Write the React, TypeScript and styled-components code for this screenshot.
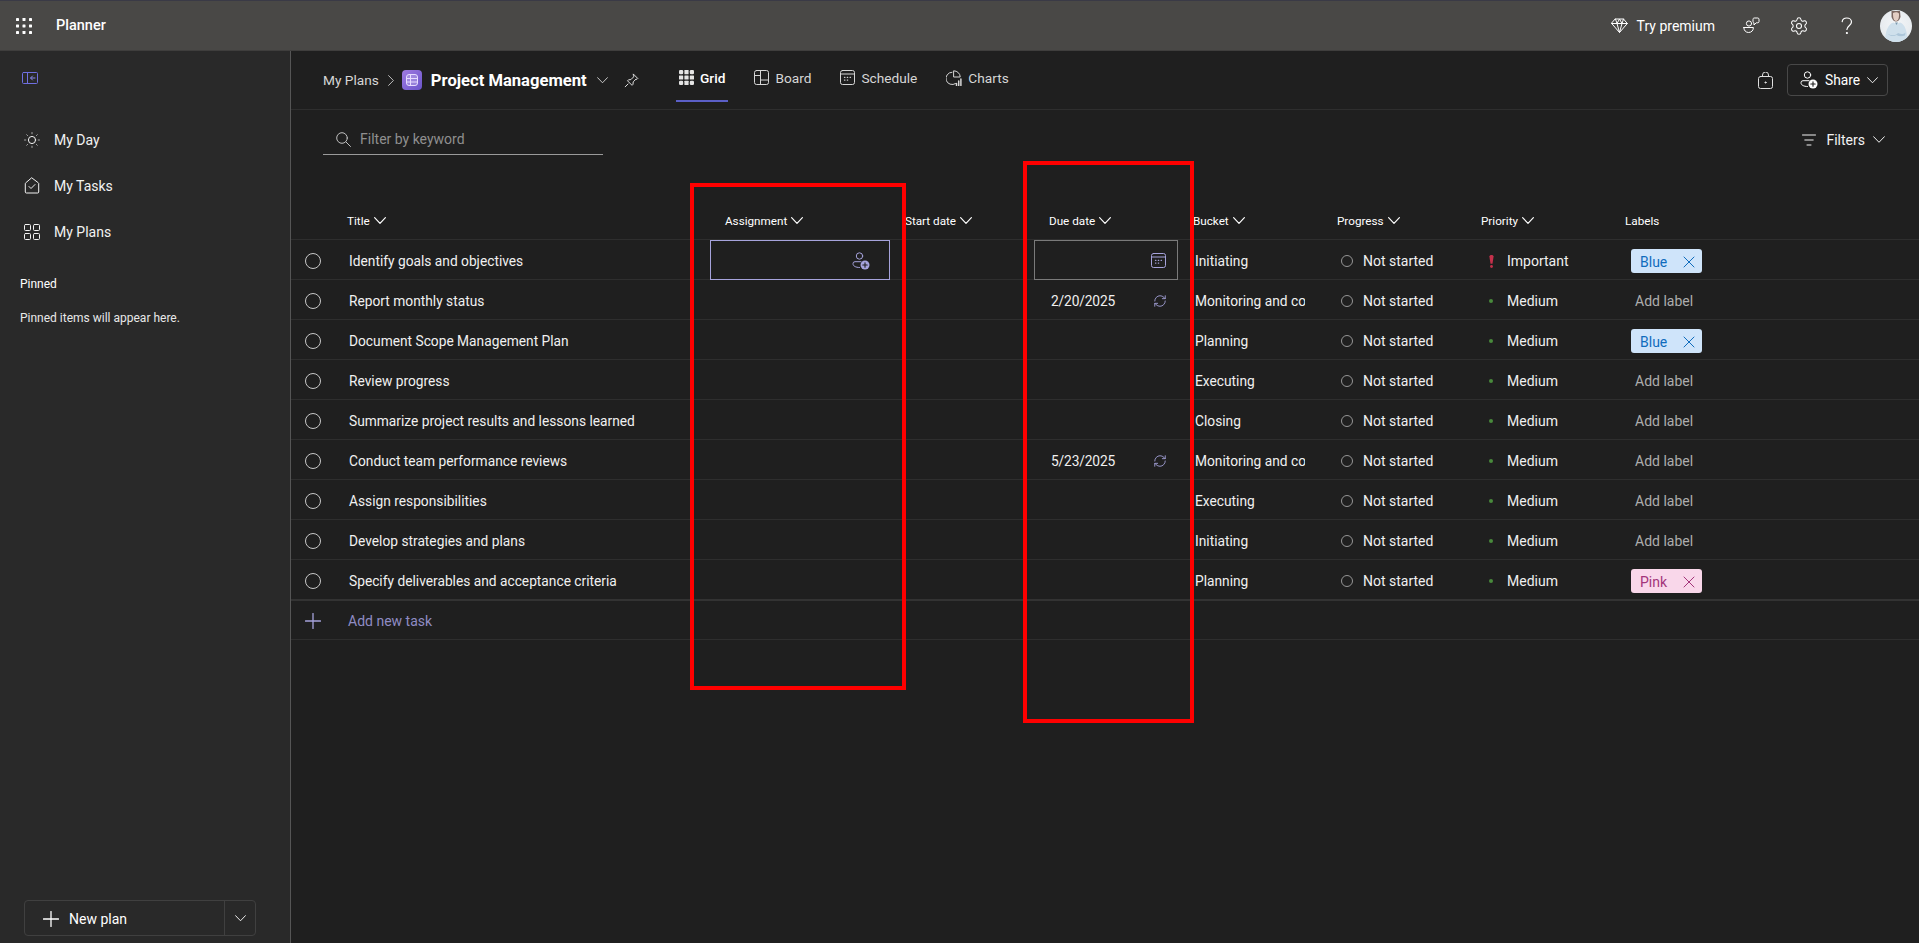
import React from 'react';
import styled, { createGlobalStyle } from 'styled-components';
import { RefreshCw, Settings } from 'lucide-react';

const GlobalStyle = createGlobalStyle`
  html, body {
    margin: 0;
    height: 100%;
    background: #1f1f1f;
  }
  body {
    font-family: Roboto, "Liberation Sans", sans-serif;
    font-size: 14px;
    color: #f5f5f5;
    overflow: hidden;
  }
  * {
    box-sizing: border-box;
  }
`;

const Page = styled.div`
  position: relative;
  display: flex;
  flex-direction: column;
  height: 943px;
  overflow: hidden;
`;

const TopBar = styled.header`
  display: flex;
  align-items: center;
  flex: 0 0 51px;
  padding: 0 7px 0 16px;
  background: #494846;
  border-top: 1px solid #3a3a46;
  border-bottom: 1px solid #3f3e3d;
`;

const AppName = styled.span`
  margin-left: 24px;
  font-size: 14.5px;
  font-weight: 500;
  color: #fff;
`;

const TopActions = styled.div`
  display: flex;
  align-items: center;
  margin-left: auto;
`;

const Premium = styled.div`
  display: flex;
  align-items: center;
  gap: 9px;
  padding-right: 12px;
  color: #fff;
`;

const TopIcon = styled.div`
  display: flex;
  align-items: center;
  justify-content: center;
  width: 48px;
  color: #fff;
`;

const AvatarWrap = styled.div`
  width: 32px;
  height: 32px;
  margin-left: 9px;
  border-radius: 50%;
  overflow: hidden;
`;

const Body = styled.div`
  display: flex;
  flex: 1;
  min-height: 0;
`;

const Sidebar = styled.aside`
  display: flex;
  flex-direction: column;
  flex: 0 0 291px;
  padding-top: 21px;
  background: #292929;
  border-right: 1px solid #555;
`;

const Collapse = styled.div`
  height: 16px;
  padding-left: 22px;
`;

const Nav = styled.nav`
  display: flex;
  flex-direction: column;
  margin-top: 29px;
`;

const NavItem = styled.div`
  display: flex;
  align-items: center;
  gap: 13px;
  height: 46px;
  padding-left: 23px;
  color: #f2f2f2;
`;

const PinnedTitle = styled.div`
  margin-top: 21px;
  padding-left: 20px;
  font-size: 12px;
  line-height: 16px;
  color: #fff;
`;

const PinnedNote = styled.div`
  margin-top: 18px;
  padding-left: 20px;
  font-size: 12px;
  line-height: 16px;
  color: #e8e8e8;
`;

const NewPlan = styled.div`
  display: flex;
  align-items: stretch;
  height: 36px;
  margin: auto 34px 7px 24px;
  border: 1px solid #404040;
  border-radius: 4px;
  color: #fff;
`;

const NewPlanMain = styled.div`
  display: flex;
  align-items: center;
  flex: 1;
  gap: 10px;
  padding: 1px 0 0 18px;
`;

const NewPlanMore = styled.div`
  display: flex;
  align-items: center;
  justify-content: center;
  flex: 0 0 31px;
  border-left: 1px solid #404040;
`;

const Main = styled.main`
  display: flex;
  flex-direction: column;
  flex: 1;
  min-width: 0;
  background: #1f1f1f;
`;

const PlanHeader = styled.div`
  display: flex;
  align-items: center;
  flex: 0 0 59px;
  padding: 0 31px 0 32px;
  border-bottom: 1px solid #2e2e2e;
`;

const Breadcrumb = styled.div`
  display: flex;
  align-items: center;
  flex: 0 0 353px;
  font-size: 13.7px;
  color: #d6d6d6;
`;

const CrumbSep = styled.span`
  display: flex;
  margin: 0 8px 0 9px;
  color: #bdbdbd;
`;

const PlanName = styled.span`
  margin: 0 10px 0 9px;
  font-size: 16.6px;
  font-weight: 700;
  color: #fff;
`;

const PinIcon = styled.span`
  display: flex;
  margin-left: 16px;
  color: #e0e0e0;
`;

const Tabs = styled.div`
  display: flex;
  align-self: flex-start;
  gap: 23px;
`;

const Tab = styled.div<{ $active?: boolean }>`
  display: flex;
  align-items: center;
  gap: 6px;
  height: 51px;
  padding: 4px 3px 0;
  border-bottom: 2px solid ${(p) => (p.$active ? '#5b5fc7' : 'transparent')};
  font-size: 13.7px;
  font-weight: ${(p) => (p.$active ? 500 : 400)};
  color: ${(p) => (p.$active ? '#fff' : '#d6d6d6')};
`;

const HeaderRight = styled.div`
  display: flex;
  align-items: center;
  gap: 14px;
  margin-left: auto;
  color: #e0e0e0;
`;

const ShareButton = styled.div`
  display: flex;
  align-items: center;
  gap: 7px;
  width: 101px;
  height: 32px;
  padding-left: 12px;
  border: 1px solid #484848;
  border-radius: 4px;
  font-size: 13.8px;
  color: #fff;
`;

const FilterBar = styled.div`
  display: flex;
  justify-content: space-between;
  flex: 0 0 90px;
  padding: 13px 34px 0 32px;
`;

const KeywordField = styled.div`
  display: flex;
  align-items: center;
  gap: 9px;
  width: 280px;
  height: 32px;
  padding: 1px 0 0 13px;
  border-bottom: 1px solid #9a9a9a;
  color: #8f8f8f;
`;

const FiltersButton = styled.div`
  display: flex;
  align-items: center;
  height: 32px;
  padding-top: 1px;
  color: #f2f2f2;
`;

const FiltersText = styled.span`
  margin: 0 8px 0 10px;
`;

const columns = '41px 378px 180px 144px 144px 144px 144px 144px 1fr';

const HeadRow = styled.div`
  display: grid;
  grid-template-columns: ${columns};
  height: 40px;
  border-bottom: 1px solid #2e2e2e;
`;

const HeadCell = styled.div`
  display: flex;
  align-items: center;
  gap: 4px;
  padding: 3px 0 0 15px;
  font-size: 11.7px;
  color: #fff;
`;

const Row = styled.div<{ $last?: boolean }>`
  display: grid;
  grid-template-columns: ${columns};
  height: ${(p) => (p.$last ? '41px' : '40px')};
  padding-top: 0;
  border-bottom: ${(p) => (p.$last ? '2px solid #333' : '1px solid #2e2e2e')};
`;

const AddRow = styled.div`
  display: flex;
  align-items: center;
  height: 39px;
  padding: 1px 0 0 14px;
  border-bottom: 1px solid #2e2e2e;
  color: #a6a3dc;
`;

const AddText = styled.span`
  margin-left: 27px;
  color: #8f8cc4;
`;

const CheckCell = styled.div`
  display: flex;
  align-items: center;
  padding: 2px 0 0 14px;
  color: #c8c8c8;
`;

const Cell = styled.div<{ $outline?: string }>`
  display: flex;
  align-items: center;
  justify-content: space-between;
  height: 40px;
  padding: 1px 11px 0 17px;
  white-space: nowrap;
  overflow: hidden;
  border: ${(p) => (p.$outline ? `1px solid ${p.$outline}` : 'none')};
  font-size: 13.75px;
  color: #f0f0f0;
`;

const DueText = styled.span`
  letter-spacing: -0.15px;
`;

const CellIcon = styled.span<{ $gap?: number }>`
  display: flex;
  margin-right: ${(p) => p.$gap ?? 0}px;
  color: #a6a3dc;
`;

const ClipText = styled.span`
  display: block;
  width: 110px;
  overflow: hidden;
`;

const StatusCell = styled.div`
  display: flex;
  align-items: center;
  gap: 10px;
  padding: 2px 0 0 19px;
  color: #f0f0f0;
`;

const StatusRing = styled.span`
  display: flex;
  color: #969696;
`;

const PriorityCell = styled.div`
  display: flex;
  align-items: center;
  gap: 10px;
  padding: 2px 0 0 19px;
  color: #f0f0f0;
`;

const PriorityMark = styled.span`
  display: flex;
  justify-content: center;
  width: 12px;
`;

const GreenDot = styled.span`
  width: 4px;
  height: 4px;
  border-radius: 50%;
  background: #498a3c;
`;

const LabelCell = styled.div`
  display: flex;
  align-items: center;
  padding: 2px 0 0 21px;
`;

const Chip = styled.div<{ $tone: 'blue' | 'pink' }>`
  display: flex;
  align-items: center;
  justify-content: space-between;
  width: 71px;
  height: 24px;
  padding: 1px 7px 0 9px;
  border-radius: 3px;
  background: ${(p) => (p.$tone === 'blue' ? '#cfe4fa' : '#f9d7ea')};
  color: ${(p) => (p.$tone === 'blue' ? '#0f6cbd' : '#a3347a')};
`;

const AddLabel = styled.span`
  padding-left: 4px;
  color: #adadad;
`;

const RedBox = styled.div<{ $left: number; $top: number; $w: number; $h: number }>`
  position: absolute;
  left: ${(p) => p.$left}px;
  top: ${(p) => p.$top}px;
  width: ${(p) => p.$w}px;
  height: ${(p) => p.$h}px;
  border: 4px solid #ff0000;
  pointer-events: none;
`;

const Svg = ({ s = 16, h, children }: { s?: number; h?: number; children: React.ReactNode }) => (
  <svg width={s} height={h ?? s} viewBox={`0 0 ${s} ${h ?? s}`} fill="none" stroke="currentColor" strokeWidth="1" strokeLinecap="round" strokeLinejoin="round">
    {children}
  </svg>
);

const Chevron = ({ w = 12, sw = 1 }: { w?: number; sw?: number }) => (
  <svg width={w} height={w * 0.6} viewBox="0 0 12 7" fill="none" stroke="currentColor" strokeWidth={sw} strokeLinecap="round" strokeLinejoin="round" style={{ flex: 'none' }}>
    <polyline points="0.6,0.6 6,6.2 11.4,0.6" />
  </svg>
);

const Waffle = () => (
  <svg width="16" height="16" viewBox="0 0 16 16" fill="#fff">
    {[0, 6.5, 13].map((y) => [0, 6.5, 13].map((x) => <rect key={`${x}-${y}`} x={x} y={y} width="3" height="3" rx="0.4" />))}
  </svg>
);

const Diamond = () => (
  <Svg s={17}>
    <path d="M4.5 2h8l3.8 4.5L8.5 15.5.7 6.5z" />
    <path d="M.7 6.5h15.6M6 6.5l2.5 9 2.5-9M4.5 2 6 6.5 8.5 2l2.5 4.5L12.5 2" />
  </Svg>
);

const Feedback = () => (
  <Svg s={17}>
    <circle cx="6" cy="6.5" r="2.6" />
    <path d="M.8 10.5h9.6c0 3-2 5-4.8 5S.8 13.5.8 10.5z" />
    <path d="M10 2.2c0-.7.5-1.2 1.2-1.2h3.6c.7 0 1.2.5 1.2 1.2v2.4c0 .7-.5 1.2-1.2 1.2h-1.6L11 8V5.8c-.6 0-1-.5-1-1.2z" />
  </Svg>
);

const Help = () => (
  <svg width="12" height="18" viewBox="0 0 12 18" fill="none" stroke="currentColor" strokeWidth="1.2" strokeLinecap="round">
    <path d="M1.2 4.6C1.5 2.4 3.4 1 5.8 1c2.7 0 4.7 1.7 4.7 4 0 3.6-4.6 3.8-4.6 7.4" />
    <circle cx="5.9" cy="16" r=".5" fill="currentColor" />
  </svg>
);

const Avatar = () => (
  <svg width="32" height="32" viewBox="0 0 32 32">
    <defs>
      <radialGradient id="avatarBg" cx="50%" cy="45%" r="65%">
        <stop offset="0%" stopColor="#f4f6f8" />
        <stop offset="100%" stopColor="#e3e8ec" />
      </radialGradient>
    </defs>
    <rect width="32" height="32" fill="url(#avatarBg)" />
    <path d="M11.5 1h8.5l.5 6c-1 3-2.500 4.500-4.500 4.500S12.500 10 11.500 7z" fill="#7b6660" />
    <path d="M13 3c2-1 4.500-1 6 .5 0 3 .2 7-3 7.500-2.500-.5-3-3.500-3-8z" fill="#e3cdc3" />
    <path d="M5 32c0-10 3-18 8.500-19.500l3 1.500 3.500-1.500c5 1.500 7.500 9 7.500 19.500z" fill="#cfe0ec" />
    <path d="M8 24c4 2 8 1.500 10-1 3 1.500 5.500 1.500 7.500-.5l-.5 3c-3 1-6 1-8.500-.5-2.500 1.500-5 1.500-8-.5z" fill="#adc6d9" />
    <path d="M15 12.500h3l-1.500 2.500z" fill="#7c9ab0" />
  </svg>
);

const CollapseIcon = () => (
  <svg width="16" height="12" viewBox="0 0 16 12" fill="none" stroke="#6f6fe0" strokeLinecap="round" strokeLinejoin="round" style={{ display: 'block' }}>
    <rect x=".5" y=".5" width="15" height="11" rx="1" />
    <path d="M5.500.5v11" />
    <path d="M13 6H9M10.500 4 8.500 6l2 2" stroke="#8b8bf0" />
  </svg>
);

const SunIcon = () => (
  <Svg s={18}>
    <circle cx="9" cy="9" r="3.600" />
    <path d="M9 1.500v1.300M9 15.200v1.300M1.500 9h1.300M15.200 9h1.300M3.700 3.700l.9.900M13.400 13.400l.9.900M3.700 14.300l.9-.9M13.400 4.600l.9-.9" stroke="#a8a8a8" />
  </Svg>
);

const TasksIcon = () => (
  <Svg s={18}>
    <path d="M9 1 15.300 5.800c.3.200.4.500.4.800v8.400c0 .6-.4 1-1 1H3.300c-.6 0-1-.4-1-1V6.600c0-.3.100-.6.400-.8z" />
    <path d="m6 9.500 2 2 4-4" />
  </Svg>
);

const PlansIcon = () => (
  <Svg s={18}>
    <rect x="1.500" y="1.500" width="6" height="6" rx="1" />
    <rect x="10.500" y="1.500" width="6" height="6" rx="1" />
    <rect x="1.500" y="10.500" width="6" height="6" rx="1" />
    <rect x="10.500" y="10.500" width="6" height="6" rx="1" />
  </Svg>
);

const PlusIcon = ({ s = 16 }: { s?: number }) => (
  <Svg s={s}>
    <path d={`M${s / 2} .5v${s - 1}M.5 ${s / 2}h${s - 1}`} strokeWidth="1.3" />
  </Svg>
);

const PlanIcon = () => (
  <svg width="20" height="20" viewBox="0 0 20 20">
    <defs>
      <linearGradient id="planBg" x1="0" y1="0" x2="1" y2="1">
        <stop offset="0%" stopColor="#a07be0" />
        <stop offset="100%" stopColor="#6a55cc" />
      </linearGradient>
    </defs>
    <rect width="20" height="20" rx="4" fill="url(#planBg)" />
    <rect x="4.500" y="4.500" width="11" height="11" rx="2.500" fill="#ffffff33" stroke="#e6dcff" />
    <path d="M8.500 4.500v11M4.500 8.500h11M4.500 12h11" stroke="#e6dcff" fill="none" />
  </svg>
);

const PinGlyph = () => (
  <Svg s={15}>
    <path d="M9.500 1.200 13.800 5.500l-.8.800-1-.200-2.800 2.800-.200 2.400-1 1-4.500-4.500 1-1 2.400-.200 2.800-2.800-.200-1z" />
    <path d="M4 11 1.200 13.800" />
  </Svg>
);

const GridIcon = () => (
  <svg width="15" height="15" viewBox="0 0 15 15" fill="#e4e4e4">
    <rect x="0" y="0" width="4.200" height="4.200" rx="1.200" />
    <rect x="5.400" y="0" width="4.200" height="4.200" rx=".5" />
    <rect x="10.800" y="0" width="4.200" height="4.200" rx="1.200" />
    <rect x="0" y="5.400" width="4.200" height="4.200" rx=".5" />
    <rect x="5.400" y="5.400" width="4.200" height="4.200" rx=".5" />
    <rect x="10.800" y="5.400" width="4.200" height="4.200" rx=".5" />
    <rect x="0" y="10.800" width="4.200" height="4.200" rx="1.200" />
    <rect x="5.400" y="10.800" width="4.200" height="4.200" rx=".5" />
    <rect x="10.800" y="10.800" width="4.200" height="4.200" rx="1.200" />
  </svg>
);

const BoardIcon = () => (
  <Svg s={15}>
    <rect x=".5" y=".5" width="14" height="14" rx="2" />
    <path d="M6.500.5v14M.5 5.500h6M6.500 10h8" />
  </Svg>
);

const CalendarIcon = () => (
  <Svg s={15}>
    <rect x=".5" y=".5" width="14" height="14" rx="2" />
    <path d="M.5 4h14" />
    <path d="M4.500 7.300h.4M7.300 7.300h.4M10.100 7.300h.4M4.500 10.100h.4M7.300 10.100h.4" strokeWidth="1.300" />
  </Svg>
);

const ChartIcon = () => (
  <Svg s={16}>
    <path d="M6 2.200a6.200 6.200 0 1 0 3.500 11.400" />
    <path d="M8 .8a6.200 6.200 0 0 1 6.200 6.200H8z" />
    <path d="M10.500 15.500v-2M12.700 15.500v-4.500M14.900 15.500V9" strokeWidth="1.500" />
  </Svg>
);

const BagIcon = () => (
  <Svg s={15} h={17}>
    <rect x=".5" y="4.500" width="14" height="12" rx="2" />
    <path d="M4.500 4.500V3a3 3 0 0 1 6 0v1.500" />
    <circle cx="7.500" cy="10.500" r=".6" fill="currentColor" />
  </Svg>
);

const PersonAdd = ({ badge, plus }: { badge: string; plus: string }) => (
  <svg width="18" height="18" viewBox="0 0 18 18" fill="none" stroke="currentColor" strokeLinecap="round">
    <circle cx="7.500" cy="4" r="3.200" />
    <path d="M9 9.700H3a2 2 0 0 0-2 2c0 2.300 2.500 3.800 6.500 3.800" />
    <circle cx="13" cy="13" r="4.500" fill={badge} stroke="none" />
    <path d="M13 10.800v4.400M10.800 13h4.400" stroke={plus} strokeWidth="1.100" />
  </svg>
);

const SearchIcon = () => (
  <Svg s={15}>
    <circle cx="6" cy="6" r="5.300" stroke="#c0c0c0" />
    <path d="m10 10 4.500 4.500" stroke="#c0c0c0" />
  </Svg>
);

const FilterLines = () => (
  <Svg s={14} h={12}>
    <path d="M.5 1h13M2.800 6h8.400M5 11h4" />
  </Svg>
);

const Ring = ({ s = 12 }: { s?: number }) => (
  <svg width={s} height={s} viewBox={`0 0 ${s} ${s}`} fill="none" stroke="currentColor" style={{ flex: 'none' }}>
    <circle cx={s / 2} cy={s / 2} r={s / 2 - 0.5} />
  </svg>
);

const ImportantMark = () => (
  <svg width="5" height="13" viewBox="0 0 5 13" fill="#c4314b">
    <path d="M.4 1.500C.4.600 1.300 0 2.500 0s2.100.6 2.100 1.500L3.500 8.800h-2z" />
    <circle cx="2.500" cy="11.500" r="1.400" />
  </svg>
);

const CloseX = () => (
  <Svg s={12}>
    <path d="M1 1l10 10M11 1 1 11" />
  </Svg>
);

type Task = {
  title: string;
  due?: string;
  bucket: string;
  priority: 'Important' | 'Medium';
  label?: 'Blue' | 'Pink';
};

const tasks: Task[] = [
  { title: 'Identify goals and objectives', bucket: 'Initiating', priority: 'Important', label: 'Blue' },
  { title: 'Report monthly status', due: '2/20/2025', bucket: 'Monitoring and controlling', priority: 'Medium' },
  { title: 'Document Scope Management Plan', bucket: 'Planning', priority: 'Medium', label: 'Blue' },
  { title: 'Review progress', bucket: 'Executing', priority: 'Medium' },
  { title: 'Summarize project results and lessons learned', bucket: 'Closing', priority: 'Medium' },
  { title: 'Conduct team performance reviews', due: '5/23/2025', bucket: 'Monitoring and controlling', priority: 'Medium' },
  { title: 'Assign responsibilities', bucket: 'Executing', priority: 'Medium' },
  { title: 'Develop strategies and plans', bucket: 'Initiating', priority: 'Medium' },
  { title: 'Specify deliverables and acceptance criteria', bucket: 'Planning', priority: 'Medium', label: 'Pink' },
];

const sortable = ['Title', 'Assignment', 'Start date', 'Due date', 'Bucket', 'Progress', 'Priority'];

const App = () => {
  return (
    <Page>
      <GlobalStyle />
      <TopBar>
        <Waffle />
        <AppName>Planner</AppName>
        <TopActions>
          <Premium>
            <Diamond />
            <span>Try premium</span>
          </Premium>
          <TopIcon><Feedback /></TopIcon>
          <TopIcon><Settings size={20} strokeWidth={1.25} /></TopIcon>
          <TopIcon><Help /></TopIcon>
          <AvatarWrap><Avatar /></AvatarWrap>
        </TopActions>
      </TopBar>
      <Body>
        <Sidebar>
          <Collapse><CollapseIcon /></Collapse>
          <Nav>
            <NavItem><SunIcon />My Day</NavItem>
            <NavItem><TasksIcon />My Tasks</NavItem>
            <NavItem><PlansIcon />My Plans</NavItem>
          </Nav>
          <PinnedTitle>Pinned</PinnedTitle>
          <PinnedNote>Pinned items will appear here.</PinnedNote>
          <NewPlan>
            <NewPlanMain><PlusIcon />New plan</NewPlanMain>
            <NewPlanMore><Chevron w={11} /></NewPlanMore>
          </NewPlan>
        </Sidebar>
        <Main>
          <PlanHeader>
            <Breadcrumb>
              My Plans
              <CrumbSep>
                <svg width="6" height="11" viewBox="0 0 6 11" fill="none" stroke="currentColor" strokeLinecap="round" strokeLinejoin="round">
                  <polyline points=".6,.6 5.400,5.500 .6,10.400" />
                </svg>
              </CrumbSep>
              <PlanIcon />
              <PlanName>Project Management</PlanName>
              <Chevron w={11} />
              <PinIcon><PinGlyph /></PinIcon>
            </Breadcrumb>
            <Tabs>
              <Tab $active><GridIcon />Grid</Tab>
              <Tab><BoardIcon />Board</Tab>
              <Tab><CalendarIcon />Schedule</Tab>
              <Tab><ChartIcon />Charts</Tab>
            </Tabs>
            <HeaderRight>
              <BagIcon />
              <ShareButton>
                <PersonAdd badge="#fff" plus="#1f1f1f" />
                Share
                <Chevron w={11} />
              </ShareButton>
            </HeaderRight>
          </PlanHeader>
          <FilterBar>
            <KeywordField>
              <SearchIcon />
              Filter by keyword
            </KeywordField>
            <FiltersButton>
              <FilterLines />
              <FiltersText>Filters</FiltersText>
              <Chevron w={12} />
            </FiltersButton>
          </FilterBar>
          <HeadRow>
            <div />
            {sortable.map((name) => (
              <HeadCell key={name}>
                {name}
                <Chevron w={12} sw={1.2} />
              </HeadCell>
            ))}
            <HeadCell>Labels</HeadCell>
          </HeadRow>
          {tasks.map((task, i) => (
            <Row key={task.title} $last={i === tasks.length - 1}>
              <CheckCell><Ring s={16} /></CheckCell>
              <Cell>{task.title}</Cell>
              {i === 0 ? (
                <Cell $outline="#a6a3dc">
                  <span />
                  <CellIcon $gap={8}><PersonAdd badge="#a6a3dc" plus="#1f1f1f" /></CellIcon>
                </Cell>
              ) : <Cell />}
              <Cell />
              {i === 0 ? (
                <Cell $outline="#7a7a7a">
                  <span />
                  <CellIcon><CalendarIcon /></CellIcon>
                </Cell>
              ) : (
                <Cell>
                  <DueText>{task.due}</DueText>
                  {task.due && <CellIcon><RefreshCw size={14} strokeWidth={1.5} /></CellIcon>}
                </Cell>
              )}
              <Cell><ClipText>{task.bucket}</ClipText></Cell>
              <StatusCell>
                <StatusRing><Ring /></StatusRing>
                Not started
              </StatusCell>
              <PriorityCell>
                <PriorityMark>{task.priority === 'Important' ? <ImportantMark /> : <GreenDot />}</PriorityMark>
                {task.priority}
              </PriorityCell>
              <LabelCell>
                {task.label ? (
                  <Chip $tone={task.label === 'Blue' ? 'blue' : 'pink'}>
                    {task.label}
                    <CloseX />
                  </Chip>
                ) : <AddLabel>Add label</AddLabel>}
              </LabelCell>
            </Row>
          ))}
          <AddRow>
            <PlusIcon />
            <AddText>Add new task</AddText>
          </AddRow>
        </Main>
      </Body>
      <RedBox $left={690} $top={183} $w={216} $h={507} />
      <RedBox $left={1023} $top={161} $w={171} $h={562} />
    </Page>
  );
};

export default App;
